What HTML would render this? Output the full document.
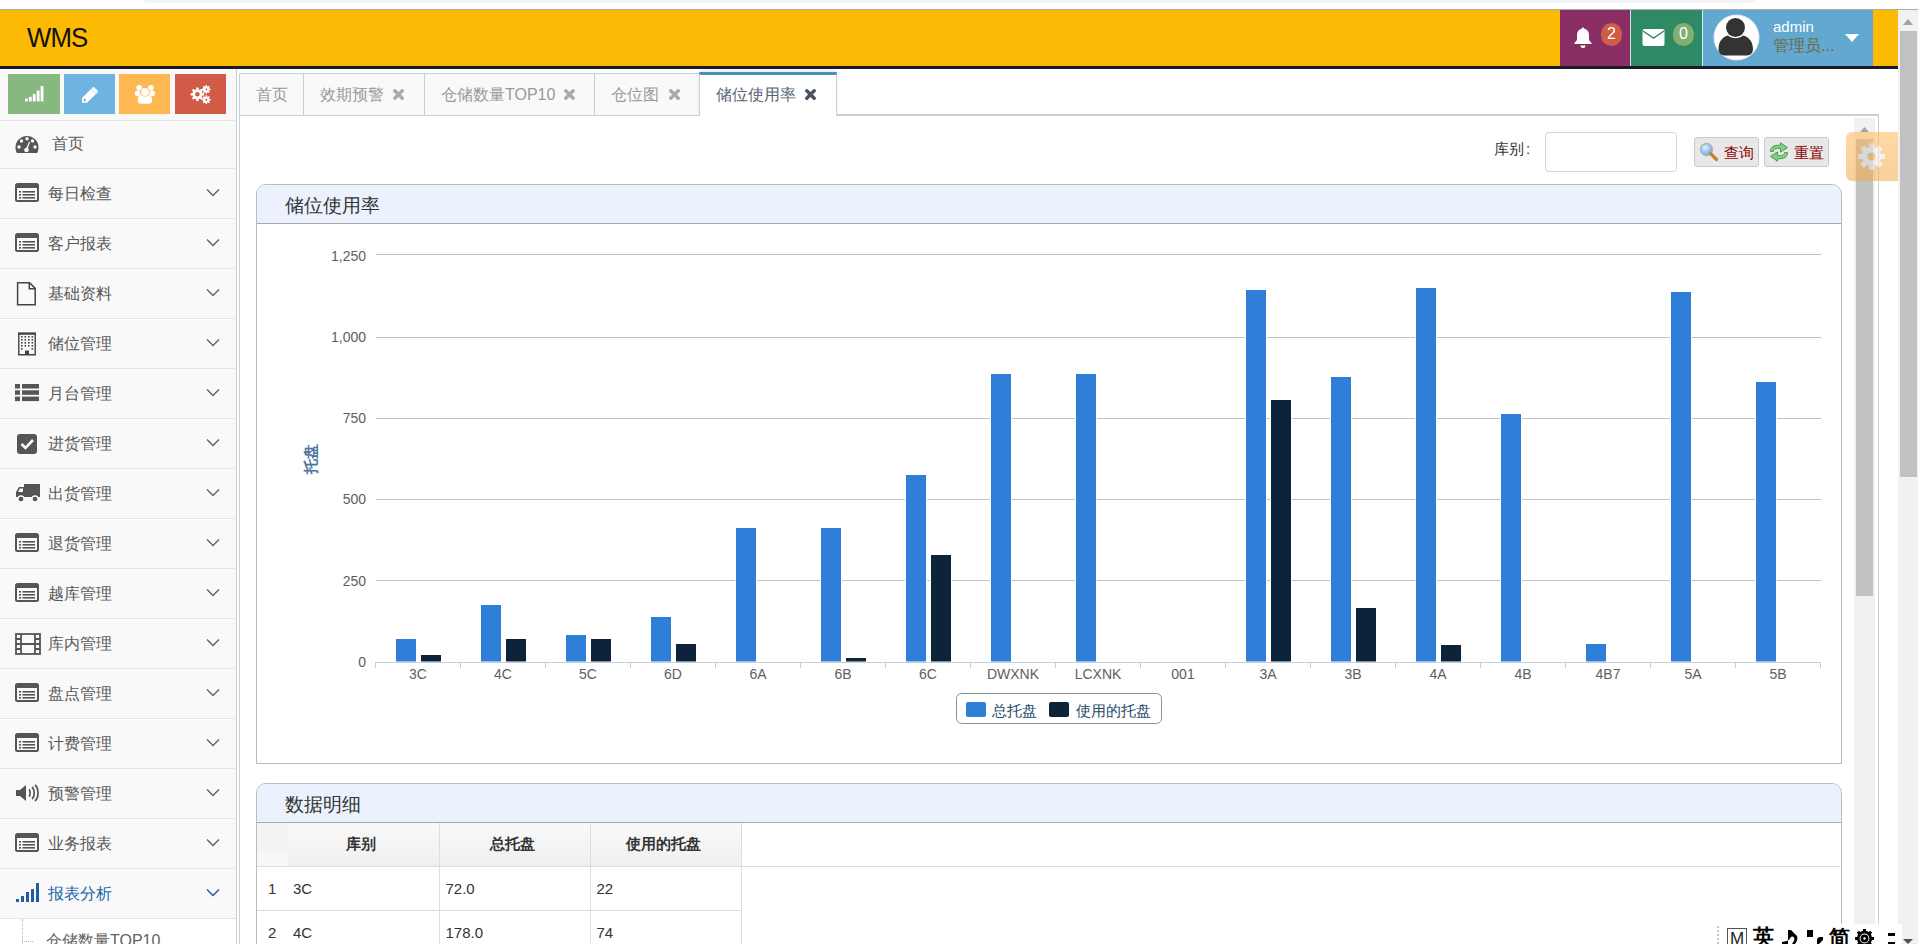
<!DOCTYPE html>
<html><head><meta charset="utf-8">
<style>
*{box-sizing:border-box}
html,body{margin:0;padding:0;width:1918px;height:944px;overflow:hidden;background:#fff;font-family:"Liberation Sans",sans-serif;}
.abs{position:absolute}
#strip{position:absolute;left:0;top:0;width:1918px;height:10px;background:#fff;border-bottom:1px solid #a9abae}
#addr{position:absolute;left:142px;top:-10px;width:1614px;height:13px;background:#f1f3f4;border-radius:8px}
#nav{position:absolute;left:0;top:10px;width:1898px;height:59px;background:#fcba05;border-bottom:3px solid #1a1a28}
#logo{position:absolute;left:27px;top:12px;font-size:28px;color:#111;letter-spacing:-1px;transform:scaleX(0.92);transform-origin:0 0}
.nb{position:absolute;top:0;height:56px}
.badge{position:absolute;top:13px;height:23px;min-width:21px;padding:0 5px;border-radius:11px;color:#fff;font-size:16px;line-height:22px;text-align:center}
#sidebar{position:absolute;left:0;top:69px;width:237px;height:875px;background:#f9f9f9;border-right:1px solid #ccc}
.sc{position:absolute;top:5px;width:52px;height:40px}
.mi{position:absolute;left:0;width:236px;height:50px;background:#f9f9f9;border-top:1px solid #e5e5e5;color:#585858} .mi:before{content:'';position:absolute;left:235px;top:-1px;width:1px;height:1px;background:#f9f9f9} .mi:after{content:'';position:absolute;left:0;top:0;width:235px;height:1px;background:#fcfcfc}
.mi .mt{position:absolute;top:15px;font-size:16px;line-height:20px}
.mi .ic{position:absolute;left:15px;top:14px;color:#555;display:block;line-height:0} .mi .ic svg{overflow:visible}
.mi .chev{position:absolute;left:206px;top:19px;color:#666}
.mi.act{color:#2264ac} .mi.act .ic, .mi.act .chev{color:#1e5ea8}
.tab{position:absolute;top:73px;height:42px;background:#f9f9f9;border:1px solid #c5d0dc;border-bottom:none;color:#999;font-size:16px;line-height:42px;padding-left:16px;white-space:nowrap}
.tab .x{display:inline-block;margin-left:9px;font-weight:bold;color:#aaa;font-size:16px}
.tab.on{top:72px;height:44px;background:#fff;border-top:3px solid #4c8fbd;color:#576373;z-index:2;line-height:40px;box-shadow:0 -2px 3px rgba(0,0,0,0.08)}
.tab.on .x{color:#444}
#content{position:absolute;left:239px;top:114px;width:1640px;height:840px;border:1px solid #c5d0dc;border-top:2px solid #c5d0dc;background:#fff}
.panel{position:absolute;left:256px;width:1586px;border:1px solid #bbb;border-radius:10px 10px 0 0;background:#fff}
.ph{position:absolute;left:0;top:0;width:100%;height:39px;background:#ebf2fd;border-bottom:1px solid #aaa;border-radius:10px 10px 0 0}
.ph span{position:absolute;left:28px;top:10px;font-size:19px;color:#333;line-height:22px}
.chart{position:absolute;left:257px;top:224px}
.chart text{font-family:"Liberation Sans",sans-serif}
table.dt{position:absolute;left:257px;top:823px;border-collapse:collapse;font-size:15px;color:#333}
.dt td,.dt th{border:1px solid #ddd;height:44px;padding:0 0 0 6px;text-align:left;font-weight:normal}
.dt th{background:linear-gradient(#f9f9f9,#efefef);font-weight:bold;text-align:center;font-size:15px;color:#333;padding:0 4px 0 0;height:43px;border-top:none}
.dt .rn{border-left:none;border-right:none;padding-left:11px;width:31px} .dt th.rn{background:linear-gradient(#f3f3f3 0,#f3f3f3 70%,#f8f8f8 70%)}
.dt td.c1,.dt th.c1{border-left:none;padding-left:5px}
.dt tr td:first-child,.dt tr th:first-child{border-left:none}
</style></head><body>
<div id="strip"><div id="addr"></div></div>
<div id="nav">
 <div id="logo">WMS</div>
 <div class="nb" style="left:1560px;width:70px;background:#892e65">
  <svg class="abs" style="left:13px;top:16px" width="20" height="22" viewBox="0 0 20 22"><path d="M10 1.5c-.8 0-1.3.6-1.3 1.3C5.5 3.5 4 6 4 9v5l-2.5 3v1h17v-1L16 14V9c0-3-1.5-5.5-4.7-6.2 0-.7-.5-1.3-1.3-1.3z M7.5 19.5a2.5 2.5 0 0 0 5 0z" fill="#fff"/></svg>
  <div class="badge" style="left:41px;background:#d15b47">2</div>
 </div>
 <div class="nb" style="left:1630px;width:72px;background:#2e8965;border-left:1px solid #d7e3dc">
  <svg class="abs" style="left:11px;top:18px" width="23" height="19" viewBox="0 0 23 19"><rect x="0.5" y="1" width="22" height="17" rx="2" fill="#fff"/><path d="M1 3l10.5 7L22 3" fill="none" stroke="#2e8965" stroke-width="1.5"/></svg>
  <div class="badge" style="left:42px;background:#82af6f">0</div>
 </div>
 <div class="nb" style="left:1702px;width:171px;background:#62a8d1;border-left:1px solid #dce9f2">
  <svg class="abs" style="left:10px;top:4px" width="47" height="47" viewBox="0 0 47 47"><circle cx="23.5" cy="23.5" r="22.5" fill="#fff" stroke="#e8eef2" stroke-width="1"/><circle cx="22.5" cy="13.5" r="9.5" fill="#333"/><path d="M5.5 35c0-8 5-13 9.5-13.5 4.5 3.5 10.5 3.5 15 0 4.5.5 10 5.5 10 13.5 0 4.5-3 6.5-7 6.5H12.5c-4 0-7-2-7-6.5z" fill="#333"/></svg>
  <div class="abs" style="left:70px;top:8px;color:#fff;font-size:15px;line-height:18px">admin</div>
  <div class="abs" style="left:70px;top:26px;color:#6b6b3e;font-size:16px;line-height:20px">管理员...</div>
  <svg class="abs" style="left:142px;top:24px" width="14" height="8" viewBox="0 0 14 8"><path d="M0 0h14L7 8z" fill="#fff"/></svg>
 </div>
</div>
<div id="sidebar">
 <div class="sc" style="left:8px;background:#87b87f"><svg class="abs" style="left:17px;top:12px" width="19" height="16" viewBox="0 0 17 14" preserveAspectRatio="none"><g fill="#fff"><rect x="0" y="11" width="2.5" height="2.5"/><rect x="3.5" y="9.5" width="2.5" height="4"/><rect x="7" y="7" width="2.5" height="6.5"/><rect x="10.5" y="4" width="2.5" height="9.5"/><rect x="14" y="0" width="2.5" height="13.5"/></g></svg></div>
 <div class="sc" style="left:64px;width:51px;background:#6fb3e0"><svg class="abs" style="left:17px;top:12px" width="18" height="18" viewBox="0 0 18 18"><path d="M1 16.8V12L11.3 1.7Q12.5 .5 13.7 1.7L16.3 4.3Q17.5 5.5 16.3 6.7L6 16.8z" fill="#fff"/><path d="M10.3 3.2l4.5 4.5" stroke="#a8d0ee" stroke-width=".8"/><path d="M3 13.2l1.6 1.6" stroke="#3d8fd0" stroke-width="1.3"/></svg></div>
 <div class="sc" style="left:119px;width:51px;background:#ffb752"><svg class="abs" style="left:15px;top:10px" width="22" height="21" viewBox="0 0 22 21"><g fill="#fff"><circle cx="5.2" cy="3.7" r="2.8"/><circle cx="16.9" cy="3.7" r="2.8"/><circle cx="3.7" cy="9.4" r="2.8"/><circle cx="18.1" cy="9.4" r="2.8"/><path d="M3.7 15.5c0-3 2-4.5 4-4.5h6.4c2 0 4 1.5 4 4.5v1.2c0 2-1.3 3-3 3H6.7c-1.7 0-3-1-3-3z"/></g><circle cx="11" cy="8" r="4.6" fill="#ffb752"/><circle cx="11" cy="8" r="3.9" fill="#fff"/></svg></div>
 <div class="sc" style="left:175px;width:51px;background:#d15b47"><svg class="abs" style="left:15px;top:10px" width="22" height="21" viewBox="0 0 22 21"><path d="M12.23 9.02L14.11 9.18L14.11 11.42L12.23 11.58L11.72 12.81L12.93 14.25L11.35 15.83L9.91 14.62L8.68 15.13L8.52 17.01L6.28 17.01L6.12 15.13L4.89 14.62L3.45 15.83L1.87 14.25L3.08 12.81L2.57 11.58L0.69 11.42L0.69 9.18L2.57 9.02L3.08 7.79L1.87 6.35L3.45 4.77L4.89 5.98L6.12 5.47L6.28 3.59L8.52 3.59L8.68 5.47L9.91 5.98L11.35 4.77L12.93 6.35L11.72 7.79Z M7.4 8a2.3 2.3 0 1 0 .01 0z" fill="#fff" fill-rule="evenodd"/><path d="M19.39 4.58L20.64 4.68L20.64 6.12L19.39 6.22L19.07 7.01L19.88 7.96L18.86 8.98L17.91 8.17L17.12 8.49L17.02 9.74L15.58 9.74L15.48 8.49L14.69 8.17L13.74 8.98L12.72 7.96L13.53 7.01L13.21 6.22L11.96 6.12L11.96 4.68L13.21 4.58L13.53 3.79L12.72 2.84L13.74 1.82L14.69 2.63L15.48 2.31L15.58 1.06L17.02 1.06L17.12 2.31L17.91 2.63L18.86 1.82L19.88 2.84L19.07 3.79Z M16.3 4.5a.9 .9 0 1 0 .01 0z" fill="#fff" fill-rule="evenodd"/><path d="M19.39 14.88L20.64 14.98L20.64 16.42L19.39 16.52L19.07 17.31L19.88 18.26L18.86 19.28L17.91 18.47L17.12 18.79L17.02 20.04L15.58 20.04L15.48 18.79L14.69 18.47L13.74 19.28L12.72 18.26L13.53 17.31L13.21 16.52L11.96 16.42L11.96 14.98L13.21 14.88L13.53 14.09L12.72 13.14L13.74 12.12L14.69 12.93L15.48 12.61L15.58 11.36L17.02 11.36L17.12 12.61L17.91 12.93L18.86 12.12L19.88 13.14L19.07 14.09Z M16.3 14.8a.9 .9 0 1 0 .01 0z" fill="#fff" fill-rule="evenodd"/></svg></div>
 <div style="position:absolute;left:0;top:-69px">
<div class="mi" style="top:120px;height:48px"><span class="ic ic-dash"><svg width="24" height="19" viewBox="0 0 24 19"><path d="M12 1A11.5 11.5 0 0 0 .5 12.5c0 2.2.5 4 1.4 5.6h20.2c.9-1.6 1.4-3.4 1.4-5.6A11.5 11.5 0 0 0 12 1z" fill="currentColor"/><g fill="#f9f9f9"><circle cx="4" cy="12" r="1.7"/><circle cx="6.5" cy="6" r="1.7"/><circle cx="12" cy="3.8" r="1.7"/><circle cx="17.5" cy="6" r="1.7"/><circle cx="20" cy="12" r="1.7"/><circle cx="11.5" cy="15" r="2.3"/><path d="M10.8 14.5L14 6.5l1 .4-2.6 8.2z"/></g></svg></span><span class="mt" style="left:52px;top:13px">首页</span></div>
<div class="mi" style="top:168px;height:50px"><span class="ic ic-lalt"><svg width="24" height="19" viewBox="0 0 24 19"><rect x="1" y="1" width="22" height="17" rx="1.5" fill="none" stroke="currentColor" stroke-width="2"/><rect x="1" y="1" width="22" height="4" fill="currentColor"/><g fill="currentColor"><rect x="4" y="8" width="2" height="1.6"/><rect x="4" y="11" width="2" height="1.6"/><rect x="4" y="14" width="2" height="1.6"/><rect x="7.5" y="8" width="12.5" height="1.6"/><rect x="7.5" y="11" width="12.5" height="1.6"/><rect x="7.5" y="14" width="12.5" height="1.6"/></g></svg></span><span class="mt" style="left:48px">每日检查</span><svg class="chev" width="14" height="9" viewBox="0 0 14 9"><path d="M1 1.5l6 6 6-6" fill="none" stroke="currentColor" stroke-width="1.5"/></svg></div>
<div class="mi" style="top:218px;height:50px"><span class="ic ic-lalt"><svg width="24" height="19" viewBox="0 0 24 19"><rect x="1" y="1" width="22" height="17" rx="1.5" fill="none" stroke="currentColor" stroke-width="2"/><rect x="1" y="1" width="22" height="4" fill="currentColor"/><g fill="currentColor"><rect x="4" y="8" width="2" height="1.6"/><rect x="4" y="11" width="2" height="1.6"/><rect x="4" y="14" width="2" height="1.6"/><rect x="7.5" y="8" width="12.5" height="1.6"/><rect x="7.5" y="11" width="12.5" height="1.6"/><rect x="7.5" y="14" width="12.5" height="1.6"/></g></svg></span><span class="mt" style="left:48px">客户报表</span><svg class="chev" width="14" height="9" viewBox="0 0 14 9"><path d="M1 1.5l6 6 6-6" fill="none" stroke="currentColor" stroke-width="1.5"/></svg></div>
<div class="mi" style="top:268px;height:50px"><span class="ic ic-file"><svg width="24" height="24" viewBox="0 0 24 24"><path d="M2.6 -.2h12l5.6 5.6v16.3H2.6z" fill="none" stroke="#444" stroke-width="1.5"/><path d="M14.3 -.2v5.9h5.9" fill="none" stroke="#444" stroke-width="1.5"/></svg></span><span class="mt" style="left:48px">基础资料</span><svg class="chev" width="14" height="9" viewBox="0 0 14 9"><path d="M1 1.5l6 6 6-6" fill="none" stroke="currentColor" stroke-width="1.5"/></svg></div>
<div class="mi" style="top:318px;height:50px"><span class="ic ic-bld"><svg width="24" height="24" viewBox="0 0 24 24"><g transform="translate(3 -1)"><path d="M.8 1.5h16.4v21.2H.8z" fill="none" stroke="#444" stroke-width="1.4"/><rect x="0" y=".5" width="18" height="2.2" fill="#444"/><g fill="#444"><rect x="3" y="4" width="1.6" height="1.6"/><rect x="6.5" y="4" width="1.6" height="1.6"/><rect x="10" y="4" width="1.6" height="1.6"/><rect x="13.5" y="4" width="1.6" height="1.6"/><rect x="3" y="7" width="1.6" height="1.6"/><rect x="6.5" y="7" width="1.6" height="1.6"/><rect x="10" y="7" width="1.6" height="1.6"/><rect x="13.5" y="7" width="1.6" height="1.6"/><rect x="3" y="10" width="1.6" height="1.6"/><rect x="6.5" y="10" width="1.6" height="1.6"/><rect x="10" y="10" width="1.6" height="1.6"/><rect x="13.5" y="10" width="1.6" height="1.6"/><rect x="3" y="13" width="1.6" height="1.6"/><rect x="6.5" y="13" width="1.6" height="1.6"/><rect x="10" y="13" width="1.6" height="1.6"/><rect x="13.5" y="13" width="1.6" height="1.6"/><rect x="3" y="16" width="1.6" height="1.6"/><rect x="13.5" y="16" width="1.6" height="1.6"/><rect x="7" y="18.5" width="4" height="4"/></g></g></svg></span><span class="mt" style="left:48px">储位管理</span><svg class="chev" width="14" height="9" viewBox="0 0 14 9"><path d="M1 1.5l6 6 6-6" fill="none" stroke="currentColor" stroke-width="1.5"/></svg></div>
<div class="mi" style="top:368px;height:50px"><span class="ic ic-list"><svg width="24" height="19" viewBox="0 0 24 19"><g fill="currentColor"><rect x="0" y="1" width="5" height="4.5"/><rect x="7" y="1" width="17" height="4.5"/><rect x="0" y="7.3" width="5" height="4.5"/><rect x="7" y="7.3" width="17" height="4.5"/><rect x="0" y="13.6" width="5" height="4.5"/><rect x="7" y="13.6" width="17" height="4.5"/></g></svg></span><span class="mt" style="left:48px">月台管理</span><svg class="chev" width="14" height="9" viewBox="0 0 14 9"><path d="M1 1.5l6 6 6-6" fill="none" stroke="currentColor" stroke-width="1.5"/></svg></div>
<div class="mi" style="top:418px;height:50px"><span class="ic ic-chk"><svg width="24" height="22" viewBox="0 0 24 22"><rect x="2" y="1" width="20" height="20" rx="3" fill="currentColor"/><path d="M6.5 11l4 4 7.5-8" fill="none" stroke="#f9f9f9" stroke-width="2.6"/></svg></span><span class="mt" style="left:48px">进货管理</span><svg class="chev" width="14" height="9" viewBox="0 0 14 9"><path d="M1 1.5l6 6 6-6" fill="none" stroke="currentColor" stroke-width="1.5"/></svg></div>
<div class="mi" style="top:468px;height:50px"><span class="ic ic-truck"><svg width="26" height="20" viewBox="0 0 26 20"><path d="M9 1h16v13H9z M1 14V9l3-5h5v10z" fill="currentColor"/><path d="M3 9l2-3.5h3V9z" fill="#f9f9f9"/><circle cx="6" cy="16" r="3" fill="currentColor" stroke="#f9f9f9" stroke-width="1.3"/><circle cx="20" cy="16" r="3" fill="currentColor" stroke="#f9f9f9" stroke-width="1.3"/></svg></span><span class="mt" style="left:48px">出货管理</span><svg class="chev" width="14" height="9" viewBox="0 0 14 9"><path d="M1 1.5l6 6 6-6" fill="none" stroke="currentColor" stroke-width="1.5"/></svg></div>
<div class="mi" style="top:518px;height:50px"><span class="ic ic-lalt"><svg width="24" height="19" viewBox="0 0 24 19"><rect x="1" y="1" width="22" height="17" rx="1.5" fill="none" stroke="currentColor" stroke-width="2"/><rect x="1" y="1" width="22" height="4" fill="currentColor"/><g fill="currentColor"><rect x="4" y="8" width="2" height="1.6"/><rect x="4" y="11" width="2" height="1.6"/><rect x="4" y="14" width="2" height="1.6"/><rect x="7.5" y="8" width="12.5" height="1.6"/><rect x="7.5" y="11" width="12.5" height="1.6"/><rect x="7.5" y="14" width="12.5" height="1.6"/></g></svg></span><span class="mt" style="left:48px">退货管理</span><svg class="chev" width="14" height="9" viewBox="0 0 14 9"><path d="M1 1.5l6 6 6-6" fill="none" stroke="currentColor" stroke-width="1.5"/></svg></div>
<div class="mi" style="top:568px;height:50px"><span class="ic ic-lalt"><svg width="24" height="19" viewBox="0 0 24 19"><rect x="1" y="1" width="22" height="17" rx="1.5" fill="none" stroke="currentColor" stroke-width="2"/><rect x="1" y="1" width="22" height="4" fill="currentColor"/><g fill="currentColor"><rect x="4" y="8" width="2" height="1.6"/><rect x="4" y="11" width="2" height="1.6"/><rect x="4" y="14" width="2" height="1.6"/><rect x="7.5" y="8" width="12.5" height="1.6"/><rect x="7.5" y="11" width="12.5" height="1.6"/><rect x="7.5" y="14" width="12.5" height="1.6"/></g></svg></span><span class="mt" style="left:48px">越库管理</span><svg class="chev" width="14" height="9" viewBox="0 0 14 9"><path d="M1 1.5l6 6 6-6" fill="none" stroke="currentColor" stroke-width="1.5"/></svg></div>
<div class="mi" style="top:618px;height:50px"><span class="ic ic-film"><svg width="26" height="22" viewBox="0 0 26 22"><rect x="1" y="1" width="24" height="20" fill="none" stroke="currentColor" stroke-width="1.8"/><path d="M6 1v20M20 1v20M1 6h5M1 11h5M1 16h5M20 6h5M20 11h5M20 16h5M6 11h14" fill="none" stroke="currentColor" stroke-width="1.8"/></svg></span><span class="mt" style="left:48px">库内管理</span><svg class="chev" width="14" height="9" viewBox="0 0 14 9"><path d="M1 1.5l6 6 6-6" fill="none" stroke="currentColor" stroke-width="1.5"/></svg></div>
<div class="mi" style="top:668px;height:50px"><span class="ic ic-lalt"><svg width="24" height="19" viewBox="0 0 24 19"><rect x="1" y="1" width="22" height="17" rx="1.5" fill="none" stroke="currentColor" stroke-width="2"/><rect x="1" y="1" width="22" height="4" fill="currentColor"/><g fill="currentColor"><rect x="4" y="8" width="2" height="1.6"/><rect x="4" y="11" width="2" height="1.6"/><rect x="4" y="14" width="2" height="1.6"/><rect x="7.5" y="8" width="12.5" height="1.6"/><rect x="7.5" y="11" width="12.5" height="1.6"/><rect x="7.5" y="14" width="12.5" height="1.6"/></g></svg></span><span class="mt" style="left:48px">盘点管理</span><svg class="chev" width="14" height="9" viewBox="0 0 14 9"><path d="M1 1.5l6 6 6-6" fill="none" stroke="currentColor" stroke-width="1.5"/></svg></div>
<div class="mi" style="top:718px;height:50px"><span class="ic ic-lalt"><svg width="24" height="19" viewBox="0 0 24 19"><rect x="1" y="1" width="22" height="17" rx="1.5" fill="none" stroke="currentColor" stroke-width="2"/><rect x="1" y="1" width="22" height="4" fill="currentColor"/><g fill="currentColor"><rect x="4" y="8" width="2" height="1.6"/><rect x="4" y="11" width="2" height="1.6"/><rect x="4" y="14" width="2" height="1.6"/><rect x="7.5" y="8" width="12.5" height="1.6"/><rect x="7.5" y="11" width="12.5" height="1.6"/><rect x="7.5" y="14" width="12.5" height="1.6"/></g></svg></span><span class="mt" style="left:48px">计费管理</span><svg class="chev" width="14" height="9" viewBox="0 0 14 9"><path d="M1 1.5l6 6 6-6" fill="none" stroke="currentColor" stroke-width="1.5"/></svg></div>
<div class="mi" style="top:768px;height:50px"><span class="ic ic-vol"><svg width="24" height="20" viewBox="0 0 24 20"><path d="M1 7h4l6-5v16l-6-5H1z" fill="currentColor"/><path d="M14 6.5c1.5 1 1.5 6 0 7M17 4c3 2.5 3 9.5 0 12M20 2c4 3.5 4 12.5 0 16" fill="none" stroke="currentColor" stroke-width="1.7"/></svg></span><span class="mt" style="left:48px">预警管理</span><svg class="chev" width="14" height="9" viewBox="0 0 14 9"><path d="M1 1.5l6 6 6-6" fill="none" stroke="currentColor" stroke-width="1.5"/></svg></div>
<div class="mi" style="top:818px;height:50px"><span class="ic ic-lalt"><svg width="24" height="19" viewBox="0 0 24 19"><rect x="1" y="1" width="22" height="17" rx="1.5" fill="none" stroke="currentColor" stroke-width="2"/><rect x="1" y="1" width="22" height="4" fill="currentColor"/><g fill="currentColor"><rect x="4" y="8" width="2" height="1.6"/><rect x="4" y="11" width="2" height="1.6"/><rect x="4" y="14" width="2" height="1.6"/><rect x="7.5" y="8" width="12.5" height="1.6"/><rect x="7.5" y="11" width="12.5" height="1.6"/><rect x="7.5" y="14" width="12.5" height="1.6"/></g></svg></span><span class="mt" style="left:48px">业务报表</span><svg class="chev" width="14" height="9" viewBox="0 0 14 9"><path d="M1 1.5l6 6 6-6" fill="none" stroke="currentColor" stroke-width="1.5"/></svg></div>
<div class="mi act" style="top:868px;height:50px"><span class="ic ic-sig"><svg width="24" height="20" viewBox="0 0 24 20"><g fill="currentColor"><rect x="1" y="16" width="3" height="3"/><rect x="6" y="13" width="3" height="6"/><rect x="11" y="9" width="3" height="10"/><rect x="16" y="6" width="3" height="13"/><rect x="21" y="0" width="3" height="19"/></g></svg></span><span class="mt" style="left:48px">报表分析</span><svg class="chev" width="14" height="9" viewBox="0 0 14 9"><path d="M1 1.5l6 6 6-6" fill="none" stroke="currentColor" stroke-width="1.5"/></svg></div>
 </div>
 <div class="abs" style="left:0;top:849px;width:236px;height:30px;background:#fff;border-top:1px solid #e5e5e5"></div>
 <div class="abs" style="left:22px;top:850px;width:0;height:30px;border-left:1px dotted #9dbdd6"></div>
 <div class="abs" style="left:22px;top:872px;width:11px;height:0;border-top:1px dotted #9dbdd6"></div>
 <div class="abs" style="left:46px;top:862px;font-size:16px;color:#616161;line-height:20px">仓储数量TOP10</div>
</div>
<div class="abs" style="left:237px;top:69px;width:2px;height:875px;background:#fff"></div>
<div id="content"></div>
<div class="tab" style="left:239px;width:65px;padding-left:16px">首页</div>
<div class="tab" style="left:303px;width:122px">效期预警<svg class="abs" style="left:89px;top:15px" width="11" height="11" viewBox="0 0 11 11"><path d="M1.8 1.8l7.4 7.4M9.2 1.8l-7.4 7.4" stroke="#aaa" stroke-width="3.4" stroke-linecap="round"/></svg></div>
<div class="tab" style="left:424px;width:171px">仓储数量TOP10<svg class="abs" style="left:139px;top:15px" width="11" height="11" viewBox="0 0 11 11"><path d="M1.8 1.8l7.4 7.4M9.2 1.8l-7.4 7.4" stroke="#aaa" stroke-width="3.4" stroke-linecap="round"/></svg></div>
<div class="tab" style="left:594px;width:106px">仓位图<svg class="abs" style="left:73.5px;top:15px" width="11" height="11" viewBox="0 0 11 11"><path d="M1.8 1.8l7.4 7.4M9.2 1.8l-7.4 7.4" stroke="#aaa" stroke-width="3.4" stroke-linecap="round"/></svg></div>
<div class="tab on" style="left:699px;width:138px">储位使用率<svg class="abs" style="left:105px;top:14px" width="11" height="11" viewBox="0 0 11 11"><path d="M1.8 1.8l7.4 7.4M9.2 1.8l-7.4 7.4" stroke="#4a5360" stroke-width="3.4" stroke-linecap="round"/></svg></div>

<div class="abs" style="left:1494px;top:140px;font-size:15px;color:#333;line-height:18px">库别<span style="margin-left:2px">:</span></div>
<div class="abs" style="left:1545px;top:132px;width:132px;height:40px;border:1px solid #d5d5d5;border-radius:4px;background:#fff"></div>
<div class="abs btn" style="left:1694px;top:137px;width:65px;height:30px;border:1px solid #c9c9c9;border-radius:3px;background:#e8e8e8"></div>
<div class="abs btn" style="left:1764px;top:137px;width:65px;height:30px;border:1px solid #c9c9c9;border-radius:3px;background:#e8e8e8"></div>
<div class="abs" style="left:1724px;top:144px;font-size:15px;color:#8e0000;line-height:18px">查询</div>
<div class="abs" style="left:1794px;top:144px;font-size:15px;color:#8e0000;line-height:18px">重置</div>

<div class="panel" style="top:184px;height:580px"><div class="ph"><span>储位使用率</span></div></div>
<svg class="chart" width="1584" height="539" viewBox="257 224 1584 539">
<g stroke="#c0c0c0" stroke-width="1" fill="none"><path d="M376 254.5H1821" /><path d="M376 337.5H1821" /><path d="M376 418.5H1821" /><path d="M376 499.5H1821" /><path d="M376 580.5H1821" /></g>
<rect x="395.5" y="638.5" width="21" height="23.5" fill="#2f7ed8" stroke="#fff"/><rect x="420.5" y="654.5" width="21" height="7.5" fill="#0d233a" stroke="#fff"/><rect x="480.5" y="604.5" width="21" height="57.5" fill="#2f7ed8" stroke="#fff"/><rect x="505.5" y="638.5" width="21" height="23.5" fill="#0d233a" stroke="#fff"/><rect x="565.5" y="634.5" width="21" height="27.5" fill="#2f7ed8" stroke="#fff"/><rect x="590.5" y="638.5" width="21" height="23.5" fill="#0d233a" stroke="#fff"/><rect x="650.5" y="616.5" width="21" height="45.5" fill="#2f7ed8" stroke="#fff"/><rect x="675.5" y="643.5" width="21" height="18.5" fill="#0d233a" stroke="#fff"/><rect x="735.5" y="527.5" width="21" height="134.5" fill="#2f7ed8" stroke="#fff"/><rect x="820.5" y="527.5" width="21" height="134.5" fill="#2f7ed8" stroke="#fff"/><rect x="845.5" y="657.5" width="21" height="4.5" fill="#0d233a" stroke="#fff"/><rect x="905.5" y="474.5" width="21" height="187.5" fill="#2f7ed8" stroke="#fff"/><rect x="930.5" y="554.5" width="21" height="107.5" fill="#0d233a" stroke="#fff"/><rect x="990.5" y="373.5" width="21" height="288.5" fill="#2f7ed8" stroke="#fff"/><rect x="1075.5" y="373.5" width="21" height="288.5" fill="#2f7ed8" stroke="#fff"/><rect x="1245.5" y="289.5" width="21" height="372.5" fill="#2f7ed8" stroke="#fff"/><rect x="1270.5" y="399.5" width="21" height="262.5" fill="#0d233a" stroke="#fff"/><rect x="1330.5" y="376.5" width="21" height="285.5" fill="#2f7ed8" stroke="#fff"/><rect x="1355.5" y="607.5" width="21" height="54.5" fill="#0d233a" stroke="#fff"/><rect x="1415.5" y="287.5" width="21" height="374.5" fill="#2f7ed8" stroke="#fff"/><rect x="1440.5" y="644.5" width="21" height="17.5" fill="#0d233a" stroke="#fff"/><rect x="1500.5" y="413.5" width="21" height="248.5" fill="#2f7ed8" stroke="#fff"/><rect x="1585.5" y="643.5" width="21" height="18.5" fill="#2f7ed8" stroke="#fff"/><rect x="1670.5" y="291.5" width="21" height="370.5" fill="#2f7ed8" stroke="#fff"/><rect x="1755.5" y="381.5" width="21" height="280.5" fill="#2f7ed8" stroke="#fff"/>
<path d="M375.5 662.5H1821" stroke="#c0d0e0" stroke-width="1"/>
<path d="M375.5 662V668 M460.5 662V668 M545.5 662V668 M630.5 662V668 M715.5 662V668 M800.5 662V668 M885.5 662V668 M970.5 662V668 M1055.5 662V668 M1140.5 662V668 M1225.5 662V668 M1310.5 662V668 M1395.5 662V668 M1480.5 662V668 M1565.5 662V668 M1650.5 662V668 M1735.5 662V668 M1820.5 662V668" stroke="#c0d0e0" stroke-width="1"/>
<g font-size="14" fill="#606060" text-anchor="end"><text x="366" y="261">1,250</text><text x="366" y="342">1,000</text><text x="366" y="423">750</text><text x="366" y="504">500</text><text x="366" y="586">250</text><text x="366" y="667">0</text></g>
<g font-size="14" fill="#606060" text-anchor="middle"><text x="418" y="679">3C</text><text x="503" y="679">4C</text><text x="588" y="679">5C</text><text x="673" y="679">6D</text><text x="758" y="679">6A</text><text x="843" y="679">6B</text><text x="928" y="679">6C</text><text x="1013" y="679">DWXNK</text><text x="1098" y="679">LCXNK</text><text x="1183" y="679">001</text><text x="1268" y="679">3A</text><text x="1353" y="679">3B</text><text x="1438" y="679">4A</text><text x="1523" y="679">4B</text><text x="1608" y="679">4B7</text><text x="1693" y="679">5A</text><text x="1778" y="679">5B</text></g>
<text transform="translate(315.5 458.5) rotate(-90)" text-anchor="middle" font-size="15" font-weight="bold" fill="#4d759e">托盘</text>
<rect x="956.5" y="693.5" width="205" height="30" rx="5" fill="#fff" stroke="#909090"/>
<rect x="966" y="702" width="20" height="15" rx="2" fill="#2f7ed8"/>
<text x="992" y="716" font-size="15" fill="#274b6d">总托盘</text>
<rect x="1049" y="702" width="20" height="15" rx="2" fill="#0d233a"/>
<text x="1076" y="716" font-size="15" fill="#274b6d">使用的托盘</text>
</svg>
<div class="panel" style="top:783px;height:200px"><div class="ph"><span>数据明细</span></div></div>
<div class="abs" style="left:257px;top:866px;width:1584px;height:1px;background:#ddd"></div>
<table class="dt">
<tr><th class="rn" style="width:31px"></th><th class="c1" style="width:151px;padding-left:0">库别</th><th style="width:151px">总托盘</th><th style="width:151px">使用的托盘</th></tr>
<tr><td class="rn">1</td><td class="c1">3C</td><td>72.0</td><td>22</td></tr>
<tr><td class="rn">2</td><td class="c1">4C</td><td>178.0</td><td>74</td></tr>
</table>
<!-- inner scrollbar -->
<div class="abs" style="left:1854px;top:118px;width:21px;height:826px;background:#f1f1f1"></div>
<svg class="abs" style="left:1860px;top:127px" width="9" height="5" viewBox="0 0 9 5"><path d="M0 5L4.5 0 9 5z" fill="#a3a3a3"/></svg>
<div class="abs" style="left:1856px;top:139px;width:17px;height:457px;background:#c1c1c1"></div>
<!-- outer scrollbar -->
<div class="abs" style="left:1898px;top:10px;width:20px;height:934px;background:#f1f1f1"></div>
<svg class="abs" style="left:1903px;top:19px" width="10" height="6" viewBox="0 0 10 6"><path d="M0 6L5 0 10 6z" fill="#a3a3a3"/></svg>
<div class="abs" style="left:1900px;top:31px;width:17px;height:446px;background:#c1c1c1"></div>
<!-- gear button -->
<div class="abs" style="left:1846px;top:132px;width:52px;height:49px;border-radius:6px 0 0 6px;background:linear-gradient(#ffb95a,#f5ab48);opacity:0.55">
<svg class="abs" style="left:12px;top:11px" width="27" height="27" viewBox="-13.5 -13.5 27 27"><g fill="#ececec"><circle r="9.5"/><g id="tooth"><rect x="-2.6" y="-13.3" width="5.2" height="6" rx="0.8"/></g><use href="#tooth" transform="rotate(45)"/><use href="#tooth" transform="rotate(90)"/><use href="#tooth" transform="rotate(135)"/><use href="#tooth" transform="rotate(180)"/><use href="#tooth" transform="rotate(225)"/><use href="#tooth" transform="rotate(270)"/><use href="#tooth" transform="rotate(315)"/></g><circle r="4" fill="#f5ab48"/></svg>
</div>
<!-- search/refresh icons -->
<svg class="abs" style="left:1699px;top:142px" width="20" height="20" viewBox="0 0 20 20"><defs><radialGradient id="lens" cx="0.4" cy="0.35" r="0.7"><stop offset="0" stop-color="#e8f4ff"/><stop offset="1" stop-color="#5aa0e0"/></radialGradient></defs><circle cx="7.5" cy="7.5" r="6" fill="url(#lens)" stroke="#a9b4bd" stroke-width="1.4"/><path d="M11.5 11.5l6 6" stroke="#c9812a" stroke-width="3.2" stroke-linecap="round"/></svg>
<svg class="abs" style="left:1769px;top:142px" width="20" height="20" viewBox="0 0 20 20"><g fill="#7dd37a" stroke="#4a8f4f" stroke-width=".9" stroke-linejoin="round"><path d="M1.5 9.5C1.5 5 4.5 3 11.5 3.2V0.8L18.5 5.6 11.5 10.2V6.4C7 6.2 4.6 7 4.3 9.5z"/><path d="M18.5 10.5C18.5 15 15.5 17 8.5 16.8V19.2L1.5 14.4 8.5 9.8V13.6C13 13.8 15.4 13 15.7 10.5z"/></g></svg>
<!-- IME toolbar -->
<div class="abs" style="left:1716px;top:924px;width:186px;height:20px;background:#fff"></div>
<div class="abs" style="left:1717px;top:926px;width:0;height:18px;border-left:2px dotted #c8c8c8"></div>
<div class="abs" style="left:1727px;top:928px;width:20px;height:20px;border:1px solid #555;font-size:17px;line-height:19px;text-align:center;color:#222">M</div>
<div class="abs" style="left:1753px;top:925px;font-size:21px;font-weight:bold;color:#000;line-height:24px">英</div>
<div class="abs" style="left:1829px;top:926px;font-size:21px;font-weight:bold;color:#000;line-height:24px">简</div>
<svg class="abs" style="left:1780px;top:929px" width="20" height="15" viewBox="0 0 20 15"><path d="M8 1h3l6 6c1 3-0.5 6-2 8h-3c1.5-2 3-4 2-6.5-1-1.5-2.5-1.5-3.5 0C9.5 11 8 12 2 13v3h6z" fill="#000"/></svg>
<div class="abs" style="left:1807px;top:930px;width:6px;height:7px;background:#000"></div>
<svg class="abs" style="left:1816px;top:936px" width="8" height="8" viewBox="0 0 8 8"><path d="M3 1h4v3L3 8H1V3z" fill="#000"/></svg>
<svg class="abs" style="left:1855px;top:929px" width="19" height="19" viewBox="0 0 19 19"><g fill="none" stroke="#000" stroke-width="2.8"><circle cx="9.5" cy="9.5" r="6.3"/><circle cx="9.5" cy="9.5" r="2.6"/></g><g stroke="#000" stroke-width="3"><path d="M9.5 0v4M9.5 15v4M0 9.5h4M15 9.5h4M2.8 2.8l2.8 2.8M13.4 13.4l2.8 2.8M16.2 2.8l-2.8 2.8M5.6 13.4l-2.8 2.8"/></g></svg>
<div class="abs" style="left:1888px;top:933px;width:7px;height:3px;background:#000"></div>
<div class="abs" style="left:1888px;top:942px;width:7px;height:2px;background:#000"></div>
<svg class="abs" style="left:1903px;top:939px" width="10" height="5" viewBox="0 0 10 5"><path d="M0 0h10L5 5z" fill="#505050"/></svg>
</body></html>
